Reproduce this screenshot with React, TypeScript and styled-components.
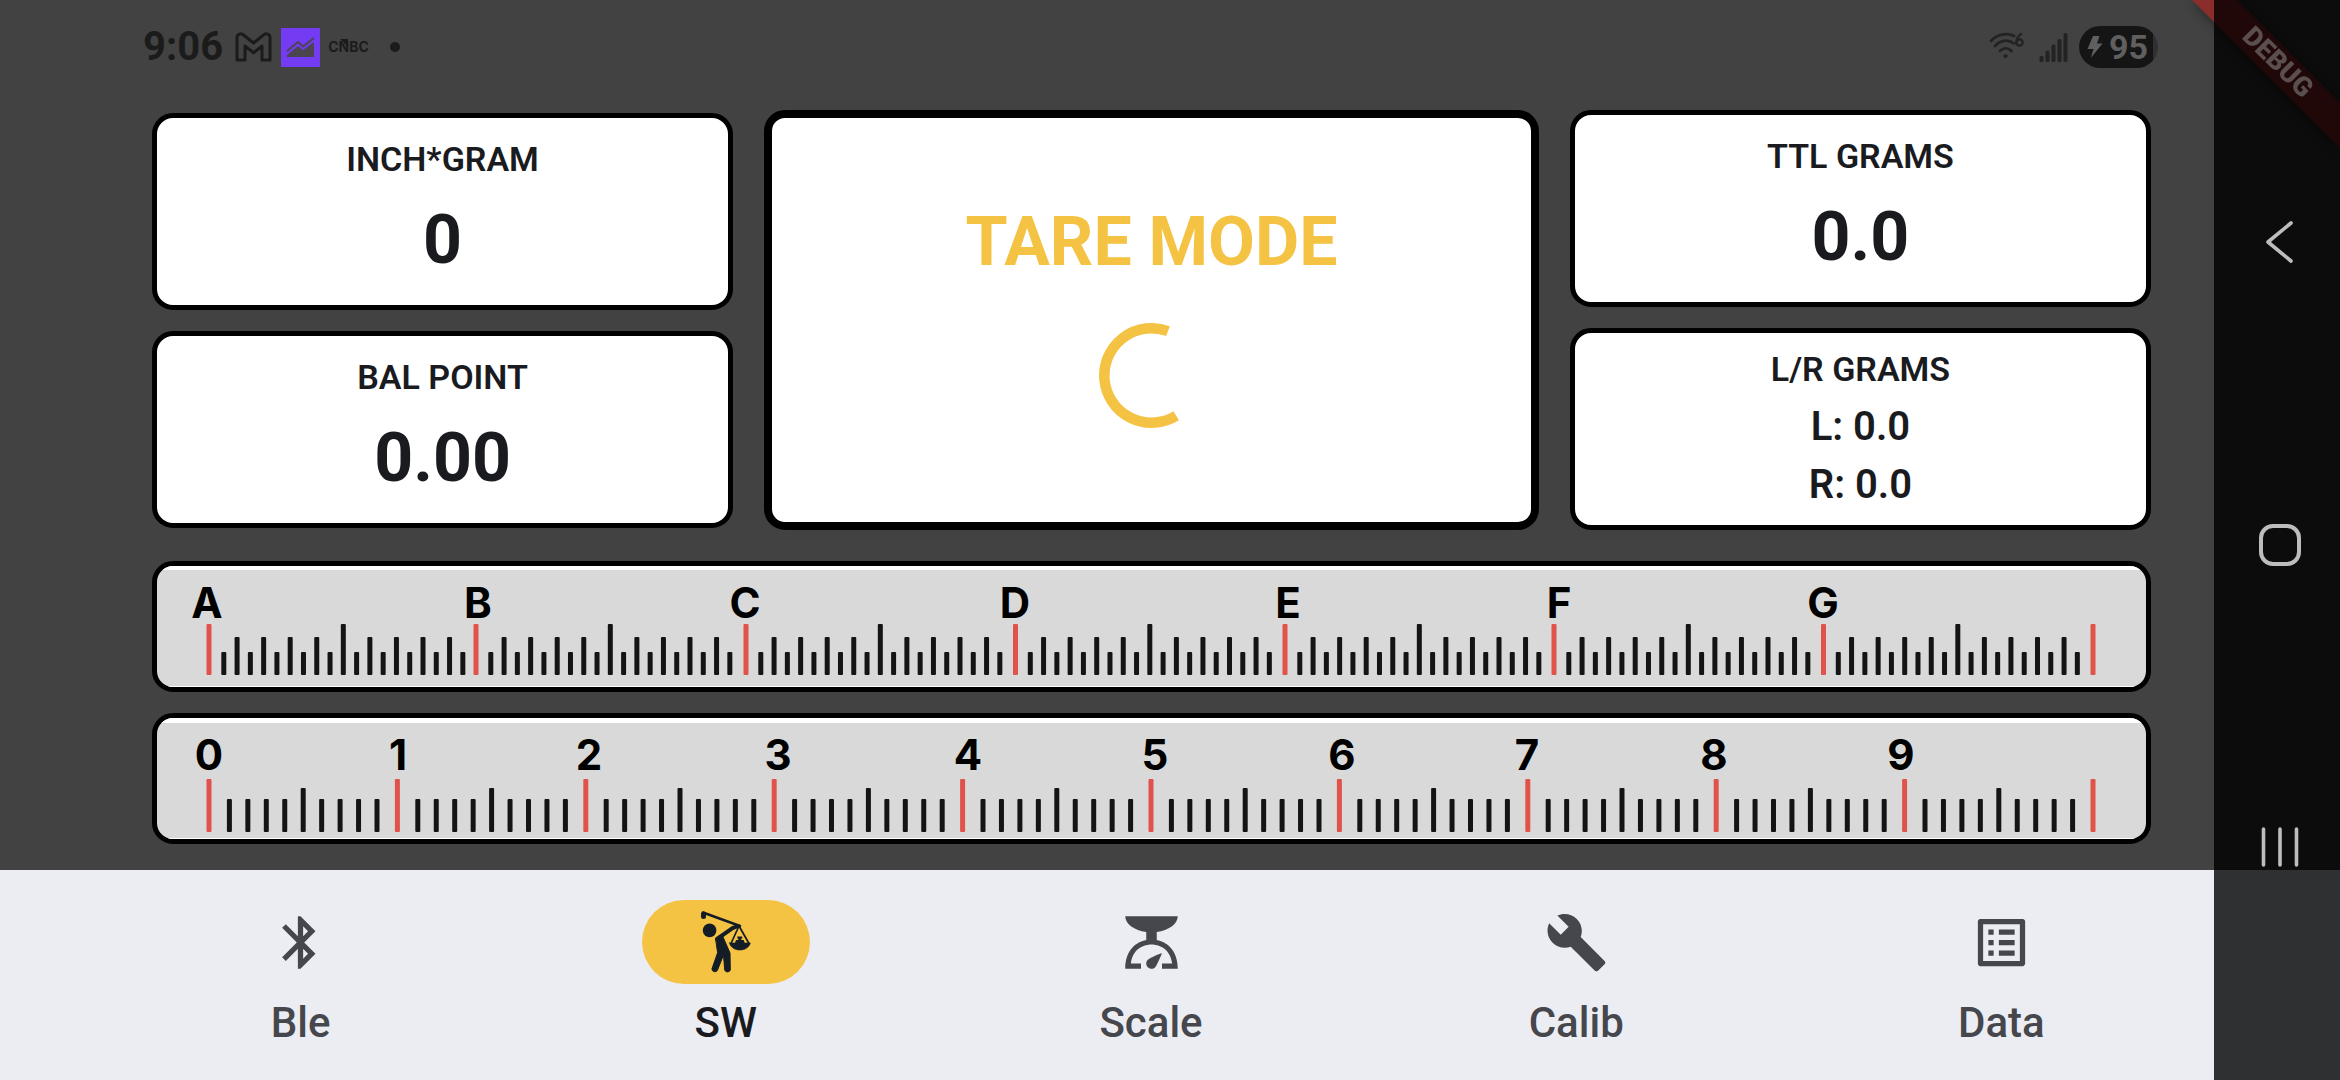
import React from "react";
import styled, { createGlobalStyle } from "styled-components";
import { MdBluetooth, MdBuild, MdListAlt } from "react-icons/md";

const GlobalStyle = createGlobalStyle`
  *, *::before, *::after { box-sizing: border-box; }
  body {
    margin: 0;
    background: #424242;
    font-family: Roboto, "Noto Sans", sans-serif;
    color: #1a1b1f;
  }
`;

/* ---------- shell ---------- */

const Shell = styled.div`
  display: grid;
  grid-template-columns: minmax(0, 1fr) 126px;
  min-height: 100vh;
  background: #424242;
  position: relative;
  overflow: hidden;
`;

const AppColumn = styled.div`
  display: flex;
  flex-direction: column;
`;

/* ---------- status bar ---------- */

const StatusBar = styled.header`
  display: flex;
  align-items: center;
  justify-content: space-between;
  height: 94px;
  padding: 0 56px 0 143px;
`;

const StatusGroup = styled.div`
  display: flex;
  align-items: center;
`;

const Clock = styled.time`
  font-size: 40px;
  line-height: 48px;
  font-weight: 700;
  color: #1b1b1b;
  margin-right: 12px;
`;

const StatusIcon = styled.svg<{ $gap: number }>`
  display: block;
  margin-right: ${(p) => p.$gap}px;
`;

const Network = styled.span`
  position: relative;
  font-family: Inter, Roboto, sans-serif;
  font-size: 14px;
  line-height: 16px;
  font-weight: 700;
  color: #1b1b1b;
  margin-right: 20px;
`;

const NetworkPlume = styled.svg`
  position: absolute;
  left: 12px;
  top: 0;
`;

const Battery = styled.div`
  display: flex;
  align-items: center;
  gap: 6px;
  height: 42px;
  padding: 0 10px 0 8px;
  border-radius: 21px;
  background: linear-gradient(to right, #151515 94%, #303030 94%);
  color: #5f5f5f;
  font-size: 34px;
  line-height: 40px;
  font-weight: 700;
`;

/* ---------- dashboard ---------- */

const Dashboard = styled.main`
  flex: 1;
  display: flex;
  flex-direction: column;
  gap: 31px;
  padding: 16px 63px 25px 152px;
`;

const Readings = styled.section`
  display: grid;
  grid-template-columns: 3fr 4fr 3fr;
  gap: 31px;
`;

const Stack = styled.div`
  display: flex;
  flex-direction: column;
  justify-content: center;
  gap: 21px;
`;

const Card = styled.article<{ $dense?: boolean }>`
  display: flex;
  flex-direction: column;
  align-items: center;
  padding: ${(p) => (p.$dense ? "16px 0" : "21px 0 25px")};
  border: 5px solid #000;
  border-radius: 21px;
  background: #fff;
`;

const CardTitle = styled.h2<{ $dense?: boolean }>`
  margin: 0 0 ${(p) => (p.$dense ? 14 : 21)}px;
  font-size: 34px;
  line-height: 40px;
  font-weight: 600;
`;

const CardValue = styled.p`
  margin: 0;
  font-size: 68px;
  line-height: 80px;
  font-weight: 700;
`;

const SideValues = styled.div`
  display: flex;
  flex-direction: column;
  align-items: center;
  gap: 10px;
  font-size: 40px;
  line-height: 48px;
  font-weight: 600;
`;

const ModeCard = styled.article`
  display: flex;
  flex-direction: column;
  align-items: center;
  justify-content: center;
  gap: 41px;
  padding-bottom: 11px;
  border: 8px solid #000;
  border-radius: 21px;
  background: #fff;
`;

const ModeTitle = styled.h1`
  margin: 0;
  font-size: 68px;
  line-height: 80px;
  font-weight: 700;
  color: #f5c344;
`;

const Rulers = styled.section`
  display: flex;
  flex-direction: column;
  gap: 21px;
`;

const RulerFrame = styled.div`
  overflow: hidden;
  border: 5px solid #000;
  border-radius: 21px;
  background: #d9d9d9;
`;

const RulerDrawing = styled.svg`
  display: block;
  width: 100%;
  height: auto;
  font-family: Inter, Roboto, sans-serif;
  font-size: 42px;
  font-weight: 700;
`;

/* ---------- bottom navigation ---------- */

const BottomNav = styled.nav`
  display: flex;
  height: 210px;
  padding: 30px 0 0 88px;
  background: #ecedf3;
`;

const NavItem = styled.button`
  flex: 1;
  display: flex;
  flex-direction: column;
  align-items: center;
  justify-content: flex-start;
  gap: 14px;
  padding: 0;
  border: 0;
  background: none;
  font: inherit;
  color: #45474d;
  cursor: pointer;
`;

const NavPill = styled.span<{ $active: boolean }>`
  display: flex;
  align-items: center;
  justify-content: center;
  width: 168px;
  height: 84px;
  border-radius: 42px;
  background: ${(p) => (p.$active ? "#f5c344" : "transparent")};
`;

const NavLabel = styled.span<{ $active: boolean }>`
  font-size: 42px;
  line-height: 49px;
  font-weight: 500;
  color: ${(p) => (p.$active ? "#1a1b1f" : "#45474d")};
`;

/* ---------- system navigation ---------- */

const SystemColumn = styled.aside`
  display: flex;
  flex-direction: column;
  background: #0c0c0c;
`;

const SystemKeys = styled.div`
  flex: 1;
  display: flex;
  flex-direction: column;
  align-items: center;
  justify-content: space-between;
  padding: 219px 0 0 6px;
`;

const SystemKey = styled.button`
  display: block;
  padding: 0;
  border: 0;
  background: none;
  cursor: pointer;

  svg {
    display: block;
  }
`;

const SystemFoot = styled.div`
  height: 210px;
  background: #2e3031;
`;

/* ---------- debug banner ---------- */

const BannerCorner = styled.div`
  position: absolute;
  top: 0;
  right: 0;
  filter: drop-shadow(0 2px 6px rgba(0, 0, 0, 0.4));
  pointer-events: none;
`;

const BannerBand = styled.div`
  position: relative;
  width: 148px;
  height: 148px;
  background: linear-gradient(to right, #8b2d2a 22px, #200808 22px);
  clip-path: polygon(0 0, 45px 0, 100% 103px, 100% 100%);
`;

const BannerText = styled.span`
  position: absolute;
  left: 86px;
  top: 62px;
  transform: translate(-50%, -50%) rotate(45deg);
  font-size: 27px;
  line-height: 32px;
  font-weight: 900;
  color: #5a4e4f;
`;

/* ---------- rulers ---------- */

const TICK_RED = "#e0534a";

type RulerProps = {
  label: string;
  labels: { text: string; x: number }[];
  majors: number[];
  firstGap: number;
  step: number;
  count: number;
  bottom: number;
  majorTop: number;
  minorTop: (index: number) => number;
  stripTop: number;
  stripBottom: number;
};

function Ruler(p: RulerProps) {
  const starts = p.majors.slice(0, -1);
  return (
    <RulerFrame>
      <RulerDrawing viewBox="0 0 1989 121" role="img" aria-label={p.label}>
        <rect width="1989" height={p.stripTop} fill="#fff" />
        <rect y={121 - p.stripBottom} width="1989" height={p.stripBottom} fill="#fff" />
        {p.labels.map((l) => (
          <text key={l.text} x={l.x} y="52" textAnchor="middle" fill="#000">
            {l.text}
          </text>
        ))}
        {starts.map((start) =>
          Array.from({ length: p.count }, (_, i) => {
            const top = p.minorTop(i);
            return (
              <rect
                key={`${start}-${i}`}
                x={start + p.firstGap + i * p.step - 2.5}
                y={top}
                width="5"
                height={p.bottom - top}
                rx="1"
                fill="#141414"
              />
            );
          })
        )}
        {p.majors.map((x) => (
          <rect
            key={x}
            x={x - 2.5}
            y={p.majorTop}
            width="5"
            height={p.bottom - p.majorTop}
            rx="1"
            fill={TICK_RED}
          />
        ))}
      </RulerDrawing>
    </RulerFrame>
  );
}

const letterLabels = [
  { text: "A", x: 50 },
  { text: "B", x: 321 },
  { text: "C", x: 588 },
  { text: "D", x: 858 },
  { text: "E", x: 1131 },
  { text: "F", x: 1402 },
  { text: "G", x: 1666 },
];

const digitLabels = [52, 241, 432, 621, 811, 998, 1185, 1370, 1557, 1744].map((x, i) => ({
  text: String(i),
  x,
}));

/* ---------- icons ---------- */

const GolferIcon = () => (
  <svg width="80" height="84" viewBox="-3 0 80 84" fill="none" stroke="#141c26" strokeLinecap="round" strokeLinejoin="round">
    <path d="M14 12.5 51 26" strokeWidth="2.4" />
    <path d="M14.5 14v2.5" strokeWidth="5" />
    <ellipse cx="20.6" cy="30.4" rx="6.8" ry="6.9" fill="#141c26" stroke="none" />
    <path d="M49 26 43.5 28.2 28 39" strokeWidth="4" />
    <path d="M27 39.5 34 37 41 53 41.3 70a3 3 0 0 1-5.6 0L34.5 55 28.3 70.5a3 3 0 0 1-5.4-1.5L28.5 53Z" fill="#141c26" strokeWidth="1" />
    <path d="M50 26 42 43.5M50 26 60 43.5" strokeWidth="1.7" />
    <path d="M40.5 43h20.8c-1 4.300-5.3 7-10.4 7s-9.400-2.7-10.4-7Z" fill="#141c26" strokeWidth=".6" />
    <path d="M48.3 36.5h5v2h-1v1.500h2.4l1.300 4H45.7l1.300-4h2.300v-1.500h-1Z" fill="#141c26" stroke="none" />
  </svg>
);

const KitchenScaleIcon = () => (
  <svg width="63" height="63" viewBox="0 0 24 24" fill="currentColor">
    <path d="M14 11V8c4.560-.58 8-3.100 8-6H2c0 2.900 3.440 5.420 8 6v3c-3.680.73-8 3.610-8 11h6v-2H4.130c.93-6.830 6.650-7.200 7.870-7.200s6.940.37 7.870 7.200H16v2h6c0-7.390-4.320-10.270-8-11z" />
    <path d="M12 22c-1.100 0-2-.9-2-2 0-.55.22-1.050.59-1.410C11.390 17.790 16 16 16 16s-1.790 4.610-2.590 5.410c-.36.37-.86.59-1.410.59z" />
  </svg>
);

const navItems = [
  { name: "Ble", icon: <MdBluetooth size={63} /> },
  { name: "SW", icon: <GolferIcon />, active: true },
  { name: "Scale", icon: <KitchenScaleIcon /> },
  { name: "Calib", icon: <MdBuild size={63} /> },
  { name: "Data", icon: <MdListAlt size={63} /> },
];

export default function App() {
  return (
    <>
      <GlobalStyle />
      <Shell>
        <AppColumn>
          <StatusBar>
            <StatusGroup>
              <Clock>9:06</Clock>
              <StatusIcon $gap={9} width="37" height="30" viewBox="0 0 37 30" fill="none" stroke="#1b1b1b" strokeLinejoin="round">
                <path d="M2 5.5C2 2 6 .8 8.5 3L18.5 11 28.5 3C31 .8 35 2 35 5.5V28H27V14L18.5 20.7 10 14V28H2Z" strokeWidth="3" />
              </StatusIcon>
              <StatusIcon $gap={8} width="39" height="39" viewBox="0 0 39 39">
                <rect width="39" height="39" fill="#733bf2" />
                <path d="M6 29V27L17 18 22 22 33 14V29Z" fill="#4b4550" />
                <path d="M6 23 17 14 22 18.5 33 10" fill="none" stroke="#4b4550" strokeWidth="2" />
              </StatusIcon>
              <Network>
                CNBC
                <NetworkPlume width="9" height="9" viewBox="0 0 9 9">
                  <path d="M0 0h8v8Z" fill="#1b1b1b" />
                </NetworkPlume>
              </Network>
              <StatusIcon $gap={0} width="12" height="12" viewBox="0 0 12 12">
                <circle cx="6" cy="6" r="5" fill="#1b1b1b" />
              </StatusIcon>
            </StatusGroup>
            <StatusGroup>
              <StatusIcon $gap={14} width="36" height="30" viewBox="0 0 36 30" fill="none" stroke="#232323" strokeWidth="2.8" strokeLinecap="round">
                <path d="M2 9C8 2 18 .5 25 4" />
                <path d="M6 14c5-6 13-7 19-2.500" />
                <path d="M11 19c3.500-3.500 8-3.500 11.500 0" />
                <circle cx="16.500" cy="24" r="1.600" fill="#232323" strokeWidth="1" />
                <circle cx="30.500" cy="10.500" r="3.200" strokeWidth="2.400" />
                <path d="M27.500 9.500C28 5.500 29.500 3.500 32 2" strokeWidth="2.400" />
              </StatusIcon>
              <StatusIcon $gap={11} width="29" height="30" viewBox="0 0 29 30" fill="#232323">
                <rect x="0.500" y="24" width="4" height="6" rx="1.500" />
                <rect x="6.500" y="18.500" width="4" height="11.500" rx="1.500" />
                <rect x="12.500" y="12.500" width="4" height="17.500" rx="1.500" />
                <rect x="18.500" y="7" width="4" height="23" rx="1.500" />
                <rect x="24.500" y="1" width="4" height="29" rx="1.500" />
              </StatusIcon>
              <Battery>
                <svg width="16" height="22" viewBox="0 0 16 22">
                  <path d="M6 0h6.500L10 7.500H15.500L3.800 22 6.500 13H.5Z" fill="#5f5f5f" />
                </svg>
                95
              </Battery>
            </StatusGroup>
          </StatusBar>

          <Dashboard>
            <Readings>
              <Stack>
                <Card>
                  <CardTitle>INCH*GRAM</CardTitle>
                  <CardValue>0</CardValue>
                </Card>
                <Card>
                  <CardTitle>BAL POINT</CardTitle>
                  <CardValue>0.00</CardValue>
                </Card>
              </Stack>
              <ModeCard>
                <ModeTitle>TARE MODE</ModeTitle>
                <svg width="105" height="105" viewBox="-52.5 -52.5 105 105" fill="none" role="img" aria-label="Loading">
                  <path d="M24.7 40.3A47.25 47.25 0 1 1 16.5-44.3" stroke="#f5c344" strokeWidth="10.5" />
                </svg>
              </ModeCard>
              <Stack>
                <Card>
                  <CardTitle>TTL GRAMS</CardTitle>
                  <CardValue>0.0</CardValue>
                </Card>
                <Card $dense>
                  <CardTitle $dense>L/R GRAMS</CardTitle>
                  <SideValues>
                    <span>L: 0.0</span>
                    <span>R: 0.0</span>
                  </SideValues>
                </Card>
              </Stack>
            </Readings>

            <Rulers>
              <Ruler
                label="Letter scale"
                labels={letterLabels}
                majors={[52, 319, 589, 858.5, 1128, 1397, 1666.5, 1936]}
                firstGap={14.8}
                step={13.28}
                count={19}
                bottom={109}
                majorTop={58}
                minorTop={(i) => (i === 9 ? 58 : i % 2 ? 71 : 86)}
                stripTop={4}
                stripBottom={1}
              />
              <Ruler
                label="Number scale"
                labels={digitLabels}
                majors={Array.from({ length: 11 }, (_, i) => 52 + i * 188.4)}
                firstGap={20.4}
                step={18.45}
                count={9}
                bottom={114}
                majorTop={61}
                minorTop={(i) => (i === 4 ? 70 : 81)}
                stripTop={5}
                stripBottom={1}
              />
            </Rulers>
          </Dashboard>

          <BottomNav>
            {navItems.map((item) => (
              <NavItem key={item.name} type="button" aria-current={item.active ? "page" : undefined}>
                <NavPill $active={!!item.active}>{item.icon}</NavPill>
                <NavLabel $active={!!item.active}>{item.name}</NavLabel>
              </NavItem>
            ))}
          </BottomNav>
        </AppColumn>

        <SystemColumn>
          <SystemKeys>
            <SystemKey type="button" aria-label="Back">
              <svg width="62" height="46" viewBox="0 0 62 46" fill="none" stroke="#bdbdbd" strokeWidth="3.6" strokeLinecap="round" strokeLinejoin="round">
                <path d="M42 4 19 23 42 42" />
              </svg>
            </SystemKey>
            <SystemKey type="button" aria-label="Home">
              <svg width="62" height="62" viewBox="0 0 62 62" fill="none" stroke="#bdbdbd" strokeWidth="4">
                <rect x="12" y="12" width="38" height="38" rx="12" />
              </svg>
            </SystemKey>
            <SystemKey type="button" aria-label="Recent apps">
              <svg width="62" height="46" viewBox="0 0 62 46" fill="none" stroke="#bdbdbd" strokeWidth="3.6" strokeLinecap="round">
                <path d="M14.5 5v36M31 5v36M47.5 5v36" />
              </svg>
            </SystemKey>
          </SystemKeys>
          <SystemFoot />
        </SystemColumn>

        <BannerCorner>
          <BannerBand>
            <BannerText>DEBUG</BannerText>
          </BannerBand>
        </BannerCorner>
      </Shell>
    </>
  );
}
